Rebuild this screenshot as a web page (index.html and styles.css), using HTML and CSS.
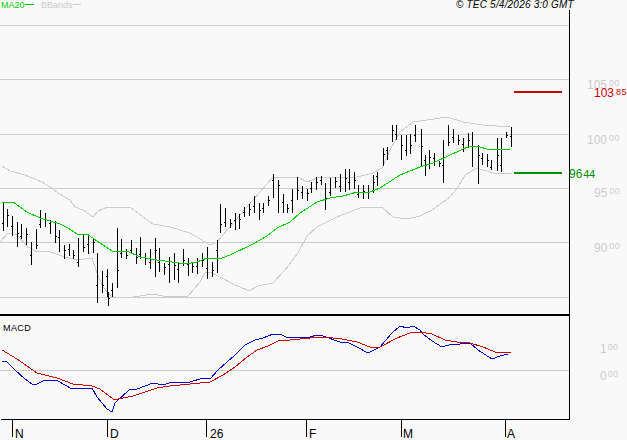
FILE: index.html
```html
<!DOCTYPE html>
<html lang="en">
<head>
<meta charset="utf-8">
<title>Chart</title>
<link rel="stylesheet" href="styles.css">
</head>
<body>
<svg class="chart" width="627" height="440" viewBox="0 0 627 440" role="img" aria-label="Price chart with MA20, Bollinger Bands and MACD">
  <g class="grid" transform="translate(0 .5)">
    <path d="M0 25H569M0 79H569M0 134H569M0 188H569M0 242H569M0 297H569M0 370H569"/>
  </g>

  <g class="band">
    <polyline points="2,166 10,171 25,175 42,182 53,189 58,193 70,200 75,207 83,210 93,217 98,211 108,207 130,207 143,217 153,224 170,227 190,233 210,245 217,242 253,200 273,177 290,177 298,177 307,182 317,178 357,177 373,173 382,168 390,150 400,132 413,122 427,120 447,117 463,122 483,125 510,127"/>
    <polyline points="0,242 8,233 17,235 28,247 35,251 50,252 65,257 77,260 92,258 97,273 103,287 112,297 133,297 153,294 163,296 188,296 200,282 205,273 210,272 220,277 233,284 249,291 258,286 273,283 285,270 298,253 307,236 317,227 337,217 360,208 382,207 393,217 407,219 420,216 432,210 450,197 458,187 465,175 477,168 493,173 512,173"/>
  </g>

  <g class="bars">
    <path transform="translate(.5 0)" d="M3 203V231M7 209V227M12 216V236M17 222V247M21 224V239M26 228V245M31 242V265M36 229V249M40 210V228M45 213V227M50 220V234M55 221V243M59 230V252M64 245V259M69 244V256M73 250V259M78 238V267M83 234V252M88 235V254M93 238V253M97 253V303M102 271V293M107 269V297M108 292V306M112 283V297M117 228V288M121 239V258M126 249V259M131 240V254M136 248V264M140 237V259M145 253V265M150 249V269M155 238V277M159 248V272M164 263V275M169 257V283M174 253V280M178 263V283M183 249V266M188 258V276M192 262V273M197 258V274M202 253V267M207 247V279M212 262V277M217 240V273M220 204V233M225 208V227M230 219V228M235 213V230M239 214V229M244 207V217M249 204V216M254 196V213M259 203V220M263 203V213M268 196V206M273 174V198M278 180V213M283 194V213M287 204V213M292 189V213M297 177V200M302 186V199M307 189V201M311 182V193M316 177V190M321 176V185M325 183V210M330 178V196M335 177V188M340 174V192M345 169V192M349 169V190M354 172V189M358 185V198M363 185V199M368 185V199M373 175V193M377 172V186M383 148V166M387 147V160M392 125V142M396 125V140M401 135V160M406 135V156M410 134V154M415 125V142M421 129V167M425 155V176M429 150V169M434 153V166M439 161V167M443 140V183M448 125V146M453 129V143M458 135V145M463 138V152M468 133V148M472 132V167M478 145V184M482 153V165M487 154V167M491 160V170M497 138V171M501 138V172M506 132V138M511 127V147"/>
    <path transform="translate(0 .5)" d="M2 223h1M8 215h1M11 226h1M18 233h1M20 236h1M27 234h1M30 255h1M37 245h1M39 224h1M46 219h1M49 223h1M56 236h1M58 237h1M65 250h1M68 249h1M74 255h1M77 262h1M84 247h1M87 244h1M94 242h1M96 285h1M103 285h1M106 276h1M109 298h1M111 290h1M118 270h1M120 253h1M127 255h1M130 250h1M137 257h1M139 254h1M146 258h1M149 262h1M156 250h1M158 262h1M165 267h1M168 264h1M175 265h1M177 269h1M184 260h1M187 264h1M193 266h1M196 266h1M203 260h1M206 268h1M213 270h1M216 250h1M221 224h1M224 222h1M231 223h1M234 220h1M240 219h1M243 212h1M250 209h1M253 206h1M260 210h1M262 208h1M269 200h1M272 180h1M279 185h1M282 202h1M288 208h1M291 200h1M298 190h1M301 192h1M308 193h1M310 188h1M317 182h1M320 180h1M326 198h1M329 192h1M336 181h1M339 186h1M346 178h1M348 182h1M355 180h1M357 194h1M364 191h1M367 192h1M374 182h1M376 176h1M384 154h1M386 150h1M393 130h1M395 134h1M402 145h1M405 150h1M411 145h1M414 135h1M422 146h1M424 160h1M430 157h1M433 158h1M440 163h1M442 165h1M449 142h1M452 137h1M459 140h1M462 144h1M469 140h1M471 146h1M479 155h1M481 158h1M488 160h1M490 167h1M498 155h1M500 165h1M507 135h1M510 136h1"/>
  </g>

  <polyline class="ma" points="2,203 5,202 13,202 20,207 27,212 40,218 50,221 60,224 68,228 77,234 87,234 97,241 112,251 127,251 140,257 157,260 172,262 185,264 197,262 207,258 210,259 222,258 230,255 253,244 267,236 277,228 290,222 300,213 317,202 330,198 343,196 357,192 370,192 380,188 400,175 420,167 433,163 450,155 470,146 477,146 490,150 510,149"/>

  <g class="target-red"><path d="M514 91.5H562"/></g>
  <g class="target-green"><path d="M514 172.5H562"/></g>

  <polyline class="macd-blue" points="2,361 7,362 15,370 25,379 32,384 37,384 45,380 58,381 72,389 92,388 97,397 107,409 112,412 115,403 130,389 137,389 153,383 163,385 172,382 190,382 203,378 210,379 218,370 235,355 245,345 255,340 263,338 273,334 280,334 288,338 293,337 310,337 317,335 323,336 340,342 347,342 357,347 368,353 380,347 392,333 400,326 407,328 413,326 420,330 423,334 432,341 442,347 452,344 460,344 470,343 478,350 492,359 500,356 508,354"/>
  <polyline class="macd-red" points="2,350 17,359 37,373 57,378 73,384 92,386 100,389 113,399 118,399 133,396 157,388 170,386 190,384 210,382 223,375 235,367 247,357 257,350 268,346 278,341 290,340 310,338 323,337 342,339 357,342 370,347 380,347 397,338 410,333 420,332 432,334 445,340 457,342 470,343 483,347 495,352 511,353"/>

  <g class="frame">
    <path class="frame-heavy" d="M0 315H569"/>
    <path transform="translate(.5 .5)" d="M569 9V419M0 419H569M12 419V436M107 419V436M206 419V436M306 419V436M401 419V436M505 419V436"/>
  </g>

  <text class="legend legend-ma" x="1" y="8">MA20</text>
  <path class="legend-ma-dash" d="M25 4.5H34"/>
  <text class="legend legend-bb" x="41" y="8">BBands</text>
  <path class="legend-bb-dash" d="M73 4.5H81"/>
  <text class="credit" x="456" y="8">© TEC 5/4/2026 3:0 GMT</text>
  <text class="legend macd-title" x="3" y="331">MACD</text>

  <g class="scale">
    <text x="587" y="89">105<tspan class="sup" dx="2" dy="-3">00</tspan></text>
    <text x="587" y="144">100<tspan class="sup" dx="2" dy="-3">00</tspan></text>
    <text x="594" y="197">95<tspan class="sup" dx="2" dy="-3">00</tspan></text>
    <text x="594" y="252">90<tspan class="sup" dx="2" dy="-3">00</tspan></text>
    <text x="600" y="353">1<tspan class="sup" dx="1" dy="-3">00</tspan></text>
    <text x="600" y="380">0<tspan class="sup" dx="1" dy="-3">00</tspan></text>
  </g>
  <text class="value value-red" x="594" y="97">103<tspan class="sup" dx="2" dy="-2">85</tspan></text>
  <text class="value value-green" x="569" y="178">96<tspan class="sup-even" dx="1">44</tspan></text>

  <g class="months">
    <text x="15" y="438">N</text>
    <text x="110" y="438">D</text>
    <text x="210" y="438">26</text>
    <text x="309" y="438">F</text>
    <text x="403" y="438">M</text>
    <text x="507" y="438">A</text>
  </g>
</svg>
</body>
</html>
```

FILE: styles.css
```css
html, body {
  margin: 0;
  padding: 0;
  background: #f9f9f9;
}

.chart {
  display: block;
  background: #f9f9f9;
  font-family: "Liberation Sans", Arial, sans-serif;
}

.chart path,
.chart polyline {
  fill: none;
  shape-rendering: crispEdges;
}

.grid path {
  stroke: #cccccc;
}

.band polyline {
  stroke: #cccccc;
}

.bars path {
  stroke: #000000;
}

.ma {
  stroke: #00cc00;
}

.target-red path {
  stroke: #cc0000;
  stroke-width: 2;
}

.target-green path {
  stroke: #009000;
  stroke-width: 2;
}

.macd-blue {
  stroke: #0000cc;
}

.macd-red {
  stroke: #cc0000;
}

.frame path {
  stroke: #000000;
}

.frame .frame-heavy {
  stroke-width: 2;
}

.legend {
  font-size: 9px;
}

.legend-ma {
  fill: #00cc00;
}

.legend-bb {
  fill: #cccccc;
}

.chart .legend-ma-dash {
  stroke: #00cc00;
}

.chart .legend-bb-dash {
  stroke: #cccccc;
}

.macd-title {
  fill: #000000;
  letter-spacing: 0.4px;
}

.credit {
  font-size: 10px;
  font-style: italic;
  fill: #000000;
  letter-spacing: 0.2px;
}

.scale text {
  font-size: 12px;
  fill: #cccccc;
}

.value {
  font-size: 12px;
}

.value-red {
  fill: #cc0000;
}

.value-green {
  fill: #009000;
}

.sup {
  font-size: 9px;
  letter-spacing: 0.4px;
}

.sup-even {
  font-size: 11px;
  letter-spacing: -0.5px;
}

.months text {
  font-size: 12px;
  fill: #000000;
}
```
